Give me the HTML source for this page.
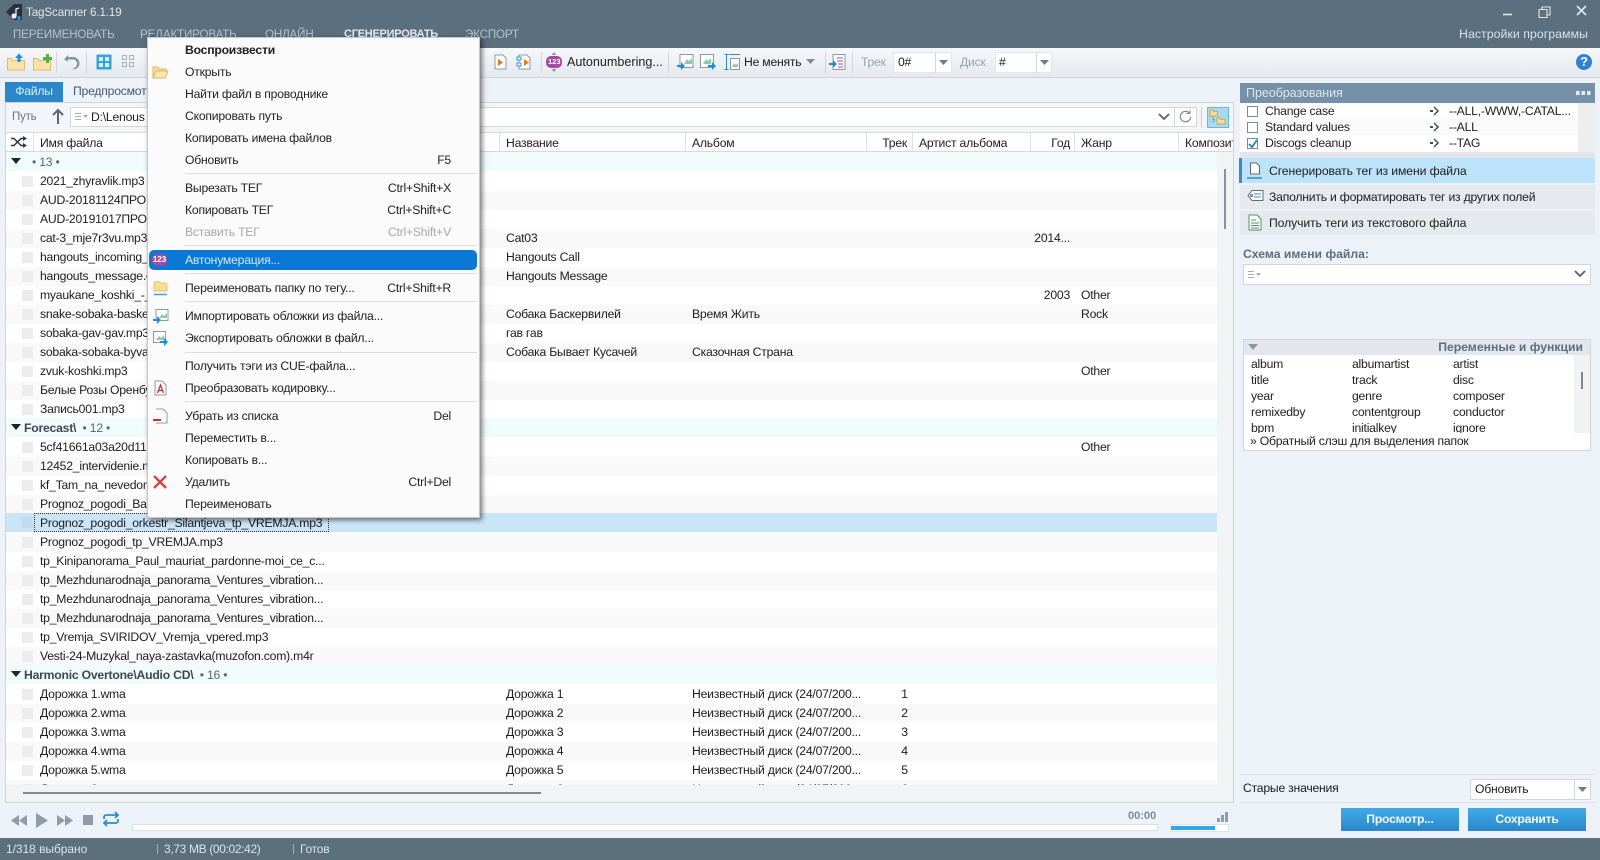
<!DOCTYPE html>
<html lang="ru"><head><meta charset="utf-8"><title>TagScanner 6.1.19</title>
<style>
html,body{margin:0;padding:0;width:1600px;height:860px;overflow:hidden;background:#edf1f8}
body{position:relative;font:12.2px/19px "Liberation Sans",sans-serif;letter-spacing:-.22px;color:#1d1d1d}
div,span,svg{position:absolute;box-sizing:border-box}
.t{white-space:nowrap}
.mb{top:25px;color:#b4c3cf;font-size:11.6px;letter-spacing:-.15px;white-space:nowrap}
.r{left:0;width:1211px;height:19px}
.g{background:#f9f9f9}
.c{left:16px;top:4px;width:11px;height:11px;background:#ececec}
.n{left:34px;top:0;white-space:nowrap}
.a{left:500px;top:0;white-space:nowrap}
.b{left:686px;top:0;white-space:nowrap}
.k{left:886px;width:25px;top:0;text-align:center}
.y{left:1020px;width:44px;top:0;text-align:right;white-space:nowrap}
.z{left:1075px;top:0}
.gr{left:0;width:1211px;height:19px;background:#f0fbfb;font-weight:bold;color:#445}
.gr .t{top:1px}
.h{top:134px;color:#222;white-space:nowrap}
.s{top:133px;width:1px;height:18px;background:#dde1e6}
.m{left:185px;white-space:nowrap;line-height:18px;color:#222}
.sc{left:340px;width:111px;text-align:right;white-space:nowrap;line-height:18px;color:#222}
.sp{left:185px;width:292px;height:1px;background:#dedede}
.v{white-space:nowrap;line-height:16px;color:#222}
.tb{top:52px;width:1px;height:21px;background:#cfd4d9}
.cb{left:1247px;width:11px;height:11px;border:1px solid #7c8a96;background:#fff}
</style></head><body>

<!-- title -->
<div style="left:0;top:0;width:1600px;height:48px;background:#5b6f7f"></div>
<svg style="left:5px;top:3px" width="18" height="18" viewBox="0 0 18 18"><path d="M1 9 9 1l8 0v16H9z" fill="#26333e"/><circle cx="9" cy="13" r="2.6" fill="#e8eef3"/><path d="M11 13V6l3-1" stroke="#e8eef3" stroke-width="1.3" fill="none"/><circle cx="14" cy="15" r="2" fill="#2b87c8"/></svg>
<div class="t" style="left:26px;top:3px;color:#dfe6eb;font-size:11.6px;letter-spacing:-.1px">TagScanner 6.1.19</div>
<div class="mb" style="left:13px">ПЕРЕИМЕНОВАТЬ</div>
<div class="mb" style="left:140px">РЕДАКТИРОВАТЬ</div>
<div class="mb" style="left:265px">ОНЛАЙН</div>
<div class="mb" style="left:344px;color:#e3eaef;font-weight:bold;font-size:11px;letter-spacing:-.25px">СГЕНЕРИРОВАТЬ</div>
<div class="mb" style="left:465px">ЭКСПОРТ</div>
<div class="mb" style="left:1459px;color:#d7e0e7;font-size:12.4px;letter-spacing:0">Настройки программы</div>
<svg style="left:1500px;top:4px" width="96" height="16" viewBox="0 0 96 16" fill="none" stroke="#dfe6eb"><path d="M3 10.5h9" stroke-width="1.6"/><path d="M39 5.5h8v8h-8zM42 5.5v-2.5h8v8h-3" stroke-width="1.1"/><path d="M77 2l9 9M86 2l-9 9" stroke-width="1.7"/></svg>

<!-- toolbar -->
<div style="left:0;top:48px;width:1600px;height:30px;background:linear-gradient(#f6f8fb,#e5e9ed);border-bottom:1px solid #cfd4d9"></div>
<svg style="left:6px;top:52px" width="20" height="20" viewBox="0 0 20 20"><path d="M1.500 6.500h4l1.500 2h11.500v9.500h-17z" fill="#fbe2a8" stroke="#dcbb72"/><path d="M13 1.500 9 6h2.500v4h3V6H17z" fill="#1d8fd6"/></svg>
<svg style="left:32px;top:52px" width="20" height="20" viewBox="0 0 20 20"><path d="M1.500 6.500h4l1.500 2h11.500v9.500h-17z" fill="#fbe2a8" stroke="#dcbb72"/><path d="M11 5h3V2h3v3h3v3h-3v3h-3V8h-3z" fill="#5aae3b"/></svg>
<div class="tb" style="left:56px"></div>
<svg style="left:63px;top:53px" width="18" height="18" viewBox="0 0 18 18" fill="none"><path d="M4 3l-3 3.500 4 2V6.500h4.500c3 0 4.500 2 4.500 4 0 2.500-2 5-5 5.500 4 1 7.500-2 7.500-5.500S14 4 10 4H5V2z" fill="#8495a3"/></svg>
<div class="tb" style="left:86px"></div>
<svg style="left:96px;top:54px" width="16" height="16" viewBox="0 0 16 16"><rect x=".5" y=".5" width="15" height="15" fill="#35a3dc"/><path d="M3 3h4v4H3zM9 3h4v4H9zM3 9h4v4H3zM9 9h4v4H9z" fill="#d8f0fb"/></svg>
<svg style="left:121px;top:54px" width="14" height="14" viewBox="0 0 14 14" fill="none" stroke="#a8b0b7"><path d="M1.500 1.500h4v4h-4zM8.500 1.500h4v4h-4zM1.500 8.500h4v4h-4zM8.500 8.500h4v4h-4z"/></svg>
<svg style="left:494px;top:54px" width="13" height="16" viewBox="0 0 13 16"><path d="M1 1h8l3 3v11H1z" fill="#fff" stroke="#8c99a4"/><path d="M4 5l5 3.500L4 12z" fill="#e07a24"/></svg>
<svg style="left:516px;top:54px" width="15" height="16" viewBox="0 0 15 16"><path d="M3 1h8l3 3v11H3z" fill="#fff" stroke="#8c99a4"/><path d="M8 5l5 3.500L8 12z" fill="#e07a24"/><path d="M1 3h4v3H1zM1 9h4v3H1z" fill="#fff" stroke="#2b9bd8"/></svg>
<div class="tb" style="left:541px"></div>
<svg style="left:545px;top:52px" width="18" height="20" viewBox="0 0 18 20"><rect x="1" y="4" width="16" height="12" rx="5" fill="#a34aa6"/><path d="M9 0l2.500 3h-5zM9 20l-2.500-3h5z" fill="#8d98a2"/></svg>
<div class="t" style="left:548px;top:55px;color:#fff;font-size:7.500px;line-height:14px;font-weight:bold;letter-spacing:0">123</div>
<div class="t" style="left:567px;top:53px;font-size:12.6px;letter-spacing:0">Autonumbering...</div>
<div class="tb" style="left:668px"></div>
<svg style="left:677px;top:53px" width="17" height="18" viewBox="0 0 17 18"><path d="M3 1.500h13v13H3z" fill="#fff" stroke="#8c99a4"/><path d="M7 11l3-5 2 2 3-3v6z" fill="#8fc9a8"/><path d="M0 12h4V9l4 4-4 4v-3H0z" fill="#1d8fd6"/></svg>
<svg style="left:699px;top:53px" width="18" height="18" viewBox="0 0 18 18"><path d="M1.500 1.500h13v13h-13z" fill="#fff" stroke="#8c99a4"/><path d="M4 11l3-5 2 2 3-3v6z" fill="#8fc9a8"/><path d="M9 12h4V9l4 4-4 4v-3H9z" fill="#1d8fd6"/></svg>
<svg style="left:724px;top:53px" width="17" height="18" viewBox="0 0 17 18" fill="none"><path d="M.5 1.500h4M2.500 1.500v15M.5 16.500h4M5 1.500h11" stroke="#2b8cc4"/><path d="M6.500 5.500h9v11h-9z" fill="#fff" stroke="#8c99a4"/><path d="M8 14l2-4 2 2 2-2v4z" fill="#8fc9a8"/></svg>
<div class="t" style="left:744px;top:53px">Не менять</div>
<svg style="left:806px;top:59px" width="9" height="6"><path d="M0 0h9L4.500 5z" fill="#808b95"/></svg>
<div class="tb" style="left:825px"></div>
<svg style="left:829px;top:53px" width="17" height="18" viewBox="0 0 17 18"><path d="M4 1.500h12v15H4z" fill="#fff" stroke="#8c99a4"/><path d="M8 5h6M8 8h6M9 11h5M9 14h5" stroke="#a34aa6"/><path d="M0 10h4V7l4 4-4 4v-3H0z" fill="#1d8fd6"/></svg>
<div class="tb" style="left:852px"></div>
<div class="t" style="left:861px;top:53px;color:#9aa4ac">Трек</div>
<div style="left:893px;top:52px;width:59px;height:21px;background:#fff;border:1px solid #e2e5e9"></div>
<div style="left:935px;top:52px;width:1px;height:21px;background:#d3d8dc"></div>
<div class="t" style="left:898px;top:53px">0#</div>
<svg style="left:939px;top:60px" width="9" height="6"><path d="M0 0h9L4.500 5z" fill="#707b85"/></svg>
<div class="t" style="left:960px;top:53px;color:#9aa4ac">Диск</div>
<div style="left:995px;top:52px;width:57px;height:21px;background:#fff;border:1px solid #e2e5e9"></div>
<div style="left:1036px;top:52px;width:1px;height:21px;background:#d3d8dc"></div>
<div class="t" style="left:999px;top:53px">#</div>
<svg style="left:1040px;top:60px" width="9" height="6"><path d="M0 0h9L4.500 5z" fill="#707b85"/></svg>
<div style="left:1576px;top:54px;width:16px;height:16px;border-radius:50%;background:#2b82d8;color:#fff;font-weight:bold;font-size:13px;line-height:16px;text-align:center">?</div>

<!-- tabs -->
<div style="left:5px;top:82px;width:58px;height:20px;background:#2b87c8;color:#dbeefb;text-align:center;line-height:19px">Файлы</div>
<div class="t" style="left:73px;top:82px;color:#47586a">Предпросмотр</div>

<!-- file panel -->
<div style="left:5px;top:102px;width:1229px;height:701px;border:1px solid #cfd4d9;background:#f2f3f5"></div>
<div style="left:6px;top:103px;width:1227px;height:29px;background:#f2f5f9"></div>
<div class="t" style="left:12px;top:108px;color:#6b7882;font-size:11.500px">Путь</div>
<svg style="left:51px;top:108px" width="14" height="17" viewBox="0 0 14 17" fill="none" stroke="#5a6772" stroke-width="2"><path d="M7 16V2M2 7l5-5 5 5"/></svg>
<div style="left:70px;top:107px;width:1127px;height:20px;background:#fff;border:1px solid #d3d7dc"></div>
<svg style="left:74px;top:112px" width="14" height="10" fill="none" stroke="#a4adb5"><path d="M1 1.500h6M1 4.500h6M1 7.500h6"/><path d="M9 3h5l-2.500 3z" fill="#a4adb5" stroke="none"/></svg>
<div class="t" style="left:91px;top:108px">D:\Lenous</div>
<svg style="left:1158px;top:113px" width="12" height="9" fill="none" stroke="#56636e" stroke-width="1.800"><path d="M1 1l5 5 5-5"/></svg>
<div style="left:1174px;top:107px;width:1px;height:20px;background:#d3d7dc"></div>
<svg style="left:1178px;top:109px" width="15" height="15" viewBox="0 0 15 15" fill="none" stroke="#7e8a94" stroke-width="1.200"><path d="M11.500 4.200A5.200 5.200 0 1 0 12.700 8"/><path d="M12 1v3.500H8.500" stroke-width="1"/></svg>
<div style="left:1201px;top:107px;width:1px;height:20px;background:#c8cdd2"></div>
<div style="left:1207px;top:107px;width:22px;height:21px;background:#a9d8ef;border:1px solid #6cb4dc"></div>
<svg style="left:1209px;top:109px" width="18" height="17" viewBox="0 0 18 17"><path d="M1 1h3l1 1.500h3.500V7H1z" fill="#f6dc95" stroke="#c9a95c"/><path d="M8 9h3l1 1.500h4V15H8z" fill="#f6dc95" stroke="#c9a95c"/><path d="M4 8v3h3M4 12v1" stroke="#5a6772" stroke-dasharray="1 1" fill="none"/></svg>

<!-- header -->
<div style="left:6px;top:132px;width:1227px;height:20px;background:#fff;border-top:1px solid #d5d9de;border-bottom:1px solid #d5d9de"></div>
<svg style="left:11px;top:136px" width="16" height="12" viewBox="0 0 16 12" fill="none" stroke="#2d3a44" stroke-width="1.500"><path d="M0 2.500h3l7 7h3M0 9.500h3l7-7h3"/><path d="M12 0l4 2.500-4 2.500zM12 7l4 2.500-4 2.500z" fill="#2d3a44" stroke="none"/></svg>
<div class="s" style="left:33px"></div><div class="h" style="left:40px">Имя файла</div>
<div class="s" style="left:499px"></div><div class="h" style="left:506px">Название</div>
<div class="s" style="left:685px"></div><div class="h" style="left:692px">Альбом</div>
<div class="s" style="left:866px"></div><div class="h" style="left:870px;width:37px;text-align:right">Трек</div>
<div class="s" style="left:912px"></div><div class="h" style="left:919px">Артист альбома</div>
<div class="s" style="left:1030px"></div><div class="h" style="left:1030px;width:40px;text-align:right">Год</div>
<div class="s" style="left:1074px"></div><div class="h" style="left:1081px">Жанр</div>
<div class="s" style="left:1178px"></div><div class="h" style="left:1185px;width:48px;overflow:hidden">Композитор</div>

<!-- list -->
<div style="left:6px;top:152px;width:1211px;height:633px;background:#fff;overflow:hidden">
<div class="gr" style="top:0"><svg style="left:5px;top:6px" width="10" height="6"><path d="M0 0h10L5 6z" fill="#222"/></svg><div class="t" style="left:26px;font-weight:normal;color:#5a6772">• 13 •</div></div>
<div class="r" style="top:19.500px"><div class="c"></div><div class="n">2021_zhyravlik.mp3</div></div>
<div class="r g" style="top:38.500px"><div class="c"></div><div class="n">AUD-20181124ПРО</div></div>
<div class="r" style="top:57.500px"><div class="c"></div><div class="n">AUD-20191017ПРО</div></div>
<div class="r g" style="top:76.500px"><div class="c"></div><div class="n">cat-3_mje7r3vu.mp3</div><div class="a">Cat03</div><div class="y">2014...</div></div>
<div class="r" style="top:95.500px"><div class="c"></div><div class="n">hangouts_incoming_</div><div class="a">Hangouts Call</div></div>
<div class="r g" style="top:114.500px"><div class="c"></div><div class="n">hangouts_message.o</div><div class="a">Hangouts Message</div></div>
<div class="r" style="top:133.500px"><div class="c"></div><div class="n">myaukane_koshki_-_</div><div class="y">2003</div><div class="z">Other</div></div>
<div class="r g" style="top:152.500px"><div class="c"></div><div class="n">snake-sobaka-baske</div><div class="a">Собака Баскервилей</div><div class="b">Время Жить</div><div class="z">Rock</div></div>
<div class="r" style="top:171.500px"><div class="c"></div><div class="n">sobaka-gav-gav.mp3</div><div class="a">гав гав</div></div>
<div class="r g" style="top:190.500px"><div class="c"></div><div class="n">sobaka-sobaka-byva</div><div class="a">Собака Бывает Кусачей</div><div class="b">Сказочная Страна</div></div>
<div class="r" style="top:209.500px"><div class="c"></div><div class="n">zvuk-koshki.mp3</div><div class="z">Other</div></div>
<div class="r g" style="top:228.500px"><div class="c"></div><div class="n">Белые Розы Оренбу</div></div>
<div class="r" style="top:247.500px"><div class="c"></div><div class="n">Запись001.mp3</div></div>
<div class="gr" style="top:266px"><svg style="left:5px;top:6px" width="10" height="6"><path d="M0 0h10L5 6z" fill="#222"/></svg><div class="t" style="left:18px">Forecast\ <span style="position:static;font-weight:normal;color:#5a6772">&nbsp;• 12 •</span></div></div>
<div class="r" style="top:285.500px"><div class="c"></div><div class="n">5cf41661a03a20d11c</div><div class="z">Other</div></div>
<div class="r g" style="top:304.500px"><div class="c"></div><div class="n">12452_intervidenie.m</div></div>
<div class="r" style="top:323.500px"><div class="c"></div><div class="n">kf_Tam_na_nevedom</div></div>
<div class="r g" style="top:342.500px"><div class="c"></div><div class="n">Prognoz_pogodi_Ba</div></div>
<div class="r" style="top:361px;background:#cbe5f8"><div class="c" style="background:#c2dbee"></div><div style="left:28px;top:0;width:295px;height:19px;border:1px dotted #333"></div><div class="n" style="top:1px">Prognoz_pogodi_orkestr_Silantjeva_tp_VREMJA.mp3</div></div>
<div class="r g" style="top:380.500px"><div class="c"></div><div class="n">Prognoz_pogodi_tp_VREMJA.mp3</div></div>
<div class="r" style="top:399.500px"><div class="c"></div><div class="n">tp_Kinipanorama_Paul_mauriat_pardonne-moi_ce_c...</div></div>
<div class="r g" style="top:418.500px"><div class="c"></div><div class="n">tp_Mezhdunarodnaja_panorama_Ventures_vibration...</div></div>
<div class="r" style="top:437.500px"><div class="c"></div><div class="n">tp_Mezhdunarodnaja_panorama_Ventures_vibration...</div></div>
<div class="r g" style="top:456.500px"><div class="c"></div><div class="n">tp_Mezhdunarodnaja_panorama_Ventures_vibration...</div></div>
<div class="r" style="top:475.500px"><div class="c"></div><div class="n">tp_Vremja_SVIRIDOV_Vremja_vpered.mp3</div></div>
<div class="r g" style="top:494.500px"><div class="c"></div><div class="n">Vesti-24-Muzykal_naya-zastavka(muzofon.com).m4r</div></div>
<div class="gr" style="top:513px"><svg style="left:5px;top:6px" width="10" height="6"><path d="M0 0h10L5 6z" fill="#222"/></svg><div class="t" style="left:18px">Harmonic Overtone\Audio CD\ <span style="position:static;font-weight:normal;color:#5a6772">&nbsp;• 16 •</span></div></div>
<div class="r" style="top:532.500px"><div class="c"></div><div class="n">Дорожка 1.wma</div><div class="a">Дорожка 1</div><div class="b">Неизвестный диск (24/07/200...</div><div class="k">1</div></div>
<div class="r g" style="top:551.500px"><div class="c"></div><div class="n">Дорожка 2.wma</div><div class="a">Дорожка 2</div><div class="b">Неизвестный диск (24/07/200...</div><div class="k">2</div></div>
<div class="r" style="top:570.500px"><div class="c"></div><div class="n">Дорожка 3.wma</div><div class="a">Дорожка 3</div><div class="b">Неизвестный диск (24/07/200...</div><div class="k">3</div></div>
<div class="r g" style="top:589.500px"><div class="c"></div><div class="n">Дорожка 4.wma</div><div class="a">Дорожка 4</div><div class="b">Неизвестный диск (24/07/200...</div><div class="k">4</div></div>
<div class="r" style="top:608.500px"><div class="c"></div><div class="n">Дорожка 5.wma</div><div class="a">Дорожка 5</div><div class="b">Неизвестный диск (24/07/200...</div><div class="k">5</div></div>
<div class="r g" style="top:627.500px"><div class="c"></div><div class="n">Дорожка 6.wma</div><div class="a">Дорожка 6</div><div class="b">Неизвестный диск (24/07/200...</div><div class="k">6</div></div>
</div>
<div style="left:1224px;top:169px;width:2px;height:60px;background:#8b9198"></div>
<div style="left:23px;top:792px;width:518px;height:2px;background:#85888c"></div>

<!-- player -->
<svg style="left:10px;top:812px" width="112" height="17" viewBox="0 0 112 17" fill="#8f9dab"><path d="M1 8.500l8-5.500v11zM9 8.500l8-5.500v11z"/><path d="M26 1l12 7.500L26 16z"/><path d="M47 3l8 5.500-8 5.500zM55 3l8 5.500-8 5.500z"/><rect x="73" y="3" width="10" height="10"/></svg>
<svg style="left:102px;top:811px" width="18" height="16" viewBox="0 0 18 16" fill="none" stroke="#2e8fc0" stroke-width="1.800"><path d="M2 8V6.500C2 5 3 4 4.500 4H15M13 1l3 3-3 3"/><path d="M16 8v1.500c0 1.500-1 2.500-2.500 2.500H3M5 9l-3 3 3 3"/></svg>
<div style="left:132px;top:824px;width:1026px;height:7px;background:#fff;border:1px solid #d6e2ea"></div>
<div class="t" style="left:1128px;top:807px;color:#7f8b95;font-weight:bold;font-size:11px;letter-spacing:0">00:00</div>
<svg style="left:1217px;top:812px" width="12" height="10" fill="#8f9dab"><rect y="6" width="3" height="4"/><rect x="4" y="3" width="3" height="7"/><rect x="8" width="3" height="10"/></svg>
<div style="left:1170px;top:824px;width:59px;height:8px;background:#fff;border:1px solid #dde5eb"></div>
<div style="left:1171px;top:826px;width:44px;height:4px;background:#33a7e0"></div>

<!-- right panel -->
<div style="left:1240px;top:83px;width:355px;height:20px;background:#7491a8"></div>
<div class="t" style="left:1246px;top:84px;color:#dbe5ec;font-size:12.6px;letter-spacing:-.1px">Преобразования</div>
<svg style="left:1576px;top:91px" width="15" height="5" fill="#e6edf2"><rect width="3.500" height="4"/><rect x="5.500" width="3.500" height="4"/><rect x="11" width="3.500" height="4"/></svg>
<div style="left:1240px;top:103px;width:355px;height:49px;background:#fff"></div>
<div style="left:1578px;top:103px;width:17px;height:49px;background:#edeef0"></div>
<div style="left:1240px;top:119px;width:338px;height:16px;background:#fafafa"></div>
<div style="left:1240px;top:152px;width:355px;height:6px;background:#e2e5e9"></div>
<div class="cb" style="top:106px"></div><div class="v" style="left:1265px;top:103px">Change case</div>
<div class="cb" style="top:122px"></div><div class="v" style="left:1265px;top:119px">Standard values</div>
<div class="cb" style="top:138px"></div><div class="v" style="left:1265px;top:135px">Discogs cleanup</div>
<svg style="left:1248px;top:139px" width="10" height="10" fill="none" stroke="#1c86b0" stroke-width="1.800"><path d="M1 5l3 3 5-7"/></svg>
<svg style="left:1429px;top:106px" width="11" height="43" viewBox="0 0 11 43" fill="none" stroke="#43505a" stroke-width="1.500"><path d="M5 1l4 4-4 4M5 17l4 4-4 4M5 33l4 4-4 4"/><path d="M1 4h3v2H1zM1 20h3v2H1zM1 36h3v2H1z" fill="#43505a" stroke="none"/></svg>
<div class="v" style="left:1449px;top:103px;width:126px;overflow:hidden">--ALL,-WWW,-CATAL...</div>
<div class="v" style="left:1449px;top:119px">--ALL</div>
<div class="v" style="left:1449px;top:135px">--TAG</div>

<div style="left:1239px;top:158px;width:356px;height:25px;background:#bde3fb;border-left:3px solid #3a8cbf"></div>
<div style="left:1240px;top:185px;width:355px;height:24px;background:#e6e9ee"></div>
<div style="left:1240px;top:211px;width:355px;height:24px;background:#e6e9ee"></div>
<svg style="left:1247px;top:162px" width="16" height="18" viewBox="0 0 16 18" fill="none"><path d="M3.500 1h6l3 3v8h-9z" fill="#fff" stroke="#5d6a75"/><path d="M0 16h15" stroke="#2e8fc0" stroke-width="1.500"/></svg>
<svg style="left:1247px;top:189px" width="17" height="14" viewBox="0 0 17 14" fill="none" stroke="#5d6a75"><path d="M5 1.500h11v10H5L1 6.500z" fill="#fff"/><path d="M7 5h7M7 8h7" stroke="#3a8cbf"/><circle cx="4.500" cy="6.500" r="1"/></svg>
<svg style="left:1248px;top:214px" width="14" height="17" viewBox="0 0 14 17" fill="none"><path d="M1 1h8l4 4v11H1z" fill="#fff" stroke="#56906a"/><path d="M3 6h5M3 9h8M3 11.500h8M3 14h8" stroke="#56906a"/></svg>
<div class="t" style="left:1269px;top:162px;letter-spacing:-.1px">Сгенерировать тег из имени файла</div>
<div class="t" style="left:1269px;top:188px">Заполнить и форматировать тег из других полей</div>
<div class="t" style="left:1269px;top:214px;letter-spacing:-.1px">Получить теги из текстового файла</div>

<div class="t" style="left:1243px;top:245px;font-weight:bold;color:#5e6e7c;font-size:12.200px;letter-spacing:0">Схема имени файла:</div>
<div style="left:1243px;top:264px;width:348px;height:21px;background:#fff;border:1px solid #d3d7dc"></div>
<svg style="left:1247px;top:270px" width="14" height="10" fill="none" stroke="#a4adb5"><path d="M1 1.500h6M1 4.500h6M1 7.500h6"/><path d="M9 3h5l-2.500 3z" fill="#a4adb5" stroke="none"/></svg>
<svg style="left:1574px;top:270px" width="12" height="9" fill="none" stroke="#56636e" stroke-width="1.800"><path d="M1 1l5 5 5-5"/></svg>

<div style="left:1243px;top:339px;width:348px;height:112px;background:#fff;border:1px solid #d3d7dc"></div>
<div style="left:1244px;top:340px;width:346px;height:15px;background:#e3e7ed"></div>
<div style="left:1574px;top:355px;width:16px;height:78px;background:#f1f2f4"></div>
<div style="left:1581px;top:372px;width:2px;height:17px;background:#80868c"></div>
<svg style="left:1248px;top:344px" width="10" height="6"><path d="M0 0h10L5 6z" fill="#8b98a4"/></svg>
<div class="t" style="right:17px;top:338px;font-weight:bold;color:#5e6e7c;font-size:12.200px;letter-spacing:0">Переменные и функции</div>
<div style="left:1251px;top:356px;width:320px;height:77px;overflow:hidden">
<div class="v" style="left:0;top:0">album</div><div class="v" style="left:101px;top:0">albumartist</div><div class="v" style="left:202px;top:0">artist</div>
<div class="v" style="left:0;top:16px">title</div><div class="v" style="left:101px;top:16px">track</div><div class="v" style="left:202px;top:16px">disc</div>
<div class="v" style="left:0;top:32px">year</div><div class="v" style="left:101px;top:32px">genre</div><div class="v" style="left:202px;top:32px">composer</div>
<div class="v" style="left:0;top:48px">remixedby</div><div class="v" style="left:101px;top:48px">contentgroup</div><div class="v" style="left:202px;top:48px">conductor</div>
<div class="v" style="left:0;top:64px">bpm</div><div class="v" style="left:101px;top:64px">initialkey</div><div class="v" style="left:202px;top:64px">ignore</div>
</div>
<div class="t" style="left:1250px;top:432px;line-height:18px">» Обратный слэш для выделения папок</div>

<div style="left:1240px;top:774px;width:355px;height:1px;background:#dcdfe4"></div>
<div style="left:1240px;top:802px;width:355px;height:1px;background:#dcdfe4"></div>
<div class="t" style="left:1243px;top:779px">Старые значения</div>
<div style="left:1470px;top:779px;width:121px;height:21px;background:#fff;border:1px solid #d3d7dc"></div>
<div style="left:1574px;top:779px;width:1px;height:21px;background:#d3d7dc"></div>
<div class="t" style="left:1475px;top:780px">Обновить</div>
<svg style="left:1578px;top:787px" width="9" height="6"><path d="M0 0h9L4.500 5z" fill="#707b85"/></svg>
<div style="left:1341px;top:808px;width:118px;height:23px;background:linear-gradient(#40abe8,#2a87cb);color:#f1f8fd;font-weight:bold;text-align:center;line-height:22px">Просмотр...</div>
<div style="left:1468px;top:808px;width:118px;height:23px;background:linear-gradient(#40abe8,#2a87cb);color:#f1f8fd;font-weight:bold;text-align:center;line-height:22px">Сохранить</div>

<!-- status -->
<div style="left:0;top:838px;width:1600px;height:22px;background:#5b6f7c"></div>
<div class="t" style="left:6px;top:840px;color:#dbe3e9;font-size:12px;letter-spacing:-.05px">1/318 выбрано</div>
<div style="left:157px;top:844px;width:1px;height:10px;background:#9fb0bc"></div>
<div class="t" style="left:164px;top:840px;color:#dbe3e9;font-size:12px;letter-spacing:-.35px">3,73 MB (00:02:42)</div>
<div style="left:293px;top:844px;width:1px;height:10px;background:#9fb0bc"></div>
<div class="t" style="left:300px;top:840px;color:#dbe3e9;font-size:12px">Готов</div>

<!-- context menu -->
<div style="left:147px;top:37px;width:333px;height:481px;background:#fbfbfb;border:1px solid #c4c7ca;box-shadow:2px 2px 5px rgba(0,0,0,.55)"></div>
<div class="m" style="top:41px;font-weight:bold">Воспроизвести</div>
<svg style="left:152px;top:65px" width="17" height="14" viewBox="0 0 17 14"><path d="M1 13V2h5l1.500 2H14v2" fill="#f8dc98" stroke="#dfba68"/><path d="M1 13l3-7h12l-3 7z" fill="#fbe7b4" stroke="#dfba68"/></svg>
<div class="m" style="top:63px">Открыть</div>
<div class="m" style="top:85px">Найти файл в проводнике</div>
<div class="m" style="top:107px">Скопировать путь</div>
<div class="m" style="top:129px">Копировать имена файлов</div>
<div class="m" style="top:151px">Обновить</div><div class="sc" style="top:151px">F5</div>
<div class="sp" style="top:173px"></div>
<div class="m" style="top:179px">Вырезать ТЕГ</div><div class="sc" style="top:179px">Ctrl+Shift+X</div>
<div class="m" style="top:201px">Копировать ТЕГ</div><div class="sc" style="top:201px">Ctrl+Shift+C</div>
<div class="m" style="top:223px;color:#a8a8a8">Вставить ТЕГ</div><div class="sc" style="top:223px;color:#a8a8a8">Ctrl+Shift+V</div>
<div class="sp" style="top:245px"></div>
<div style="left:149px;top:250px;width:328px;height:20px;background:#0a78d4;border-radius:5px"></div>
<div style="left:152px;top:254px;width:15px;height:12px;background:#a34aa6;border-radius:5px;color:#fff;font-weight:bold;font-size:8px;line-height:12px;text-align:center;letter-spacing:0">123</div>
<div class="m" style="top:251px;color:#cfe8fb">Автонумерация...</div>
<div class="sp" style="top:273px"></div>
<svg style="left:153px;top:280px" width="15" height="16" viewBox="0 0 15 16"><path d="M1 11V3.500C1 2 2 1.500 3 1.500h3L7.500 3H12c1 0 2 .5 2 2V11z" fill="#f8dc98" stroke="#e5c678"/><path d="M1 14.500h13" stroke="#4aa8cf" stroke-width="1.600"/></svg>
<div class="m" style="top:279px">Переименовать папку по тегу...</div><div class="sc" style="top:279px">Ctrl+Shift+R</div>
<div class="sp" style="top:301px"></div>
<svg style="left:153px;top:308px" width="16" height="17" viewBox="0 0 16 17"><path d="M3 1.500h12v11H3z" fill="#fff" stroke="#8c99a4"/><path d="M6 10l3-4 2 2 3-3v5z" fill="#8fc9a8"/><path d="M0 11h4V8l4 4-4 4v-3H0z" fill="#1d8fd6"/></svg>
<div class="m" style="top:307px">Импортировать обложки из файла...</div>
<svg style="left:152px;top:330px" width="17" height="16" viewBox="0 0 17 16"><path d="M1.500 1.500h12v11h-12z" fill="#fff" stroke="#8c99a4"/><path d="M4 10l3-4 2 2 3-3v5z" fill="#8fc9a8"/><path d="M8 11h4V8l4 4-4 4v-3H8z" fill="#1d8fd6"/></svg>
<div class="m" style="top:329px">Экспортировать обложки в файл...</div>
<div class="sp" style="top:352px"></div>
<div class="m" style="top:357px">Получить тэги из CUE-файла...</div>
<svg style="left:154px;top:380px" width="13" height="16" viewBox="0 0 13 16"><path d="M1 1h7l4 4v10H1z" fill="#fff" stroke="#8c99a4"/><path d="M3.500 13L6.500 5 9.500 13M4.500 10.500h4" stroke="#c9322f" stroke-width="1.300" fill="none"/></svg>
<div class="m" style="top:379px">Преобразовать кодировку...</div>
<div class="sp" style="top:401px"></div>
<svg style="left:153px;top:408px" width="15" height="16" viewBox="0 0 15 16"><path d="M3 1h7l4 4v10H3" fill="#fff" stroke="#8c99a4"/><path d="M0 12h8" stroke="#c9322f" stroke-width="2"/></svg>
<div class="m" style="top:407px">Убрать из списка</div><div class="sc" style="top:407px">Del</div>
<div class="m" style="top:429px">Переместить в...</div>
<div class="m" style="top:451px">Копировать в...</div>
<svg style="left:153px;top:475px" width="14" height="14" viewBox="0 0 14 14"><path d="M1 1l12 12M13 1L1 13" stroke="#d8433f" stroke-width="2.400"/></svg>
<div class="m" style="top:473px">Удалить</div><div class="sc" style="top:473px">Ctrl+Del</div>
<div class="m" style="top:495px">Переименовать</div>
</body></html>
